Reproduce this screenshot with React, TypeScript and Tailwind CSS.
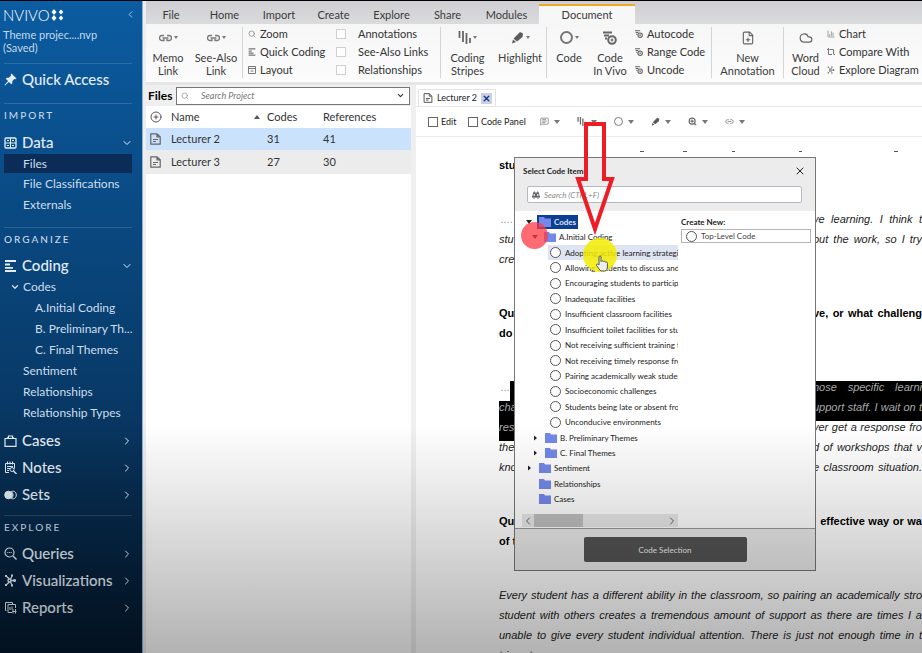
import React from "react";
import {
  BarChart3,
  Binoculars,
  ChevronDown,
  ChevronLeft,
  ChevronRight,
  CirclePlus,
  Cloud,
  FilePlus,
  Link2,
  MessageSquareText,
  Search,
  X,
  ZoomIn,
} from "lucide-react";

const Caret = () => (
  <svg viewBox="0 0 6 4" className="h-[4px] w-[6px] shrink-0 fill-[#777]">
    <path d="M0 0h6L3 4z" />
  </svg>
);

const Folder = () => (
  <svg viewBox="0 0 12 10" className="h-[10px] w-[12px] shrink-0 fill-[#7388ea]">
    <path d="M0 0h5l1 1.500h6V10H0z" />
  </svg>
);

const PinIcon = () => (
  <svg viewBox="0 0 13 13" className="h-[13px] w-[13px] fill-current">
    <path d="M7.500.500 12.500 5.500 11.300 6.300 10.300 6 8.300 8.300 8.300 10.300 7.300 11.300 4.900 8.900 1 12.500.500 12 4.100 8.100 1.700 5.700 2.700 4.700 4.700 4.700 7 2.700 6.700 1.500z" />
  </svg>
);

const DataIcon = () => (
  <svg viewBox="0 0 13 12" className="h-[12px] w-[13px] fill-none stroke-current">
    <rect x="1" y="1" width="11" height="10" rx="1" strokeWidth="1.300" />
    <path d="M1 6h11M6.500 1v10M3 3.500h2M8 3.500h2M3 8.500h2M8 8.500h2" />
  </svg>
);

const CodingIcon = ({ className = "h-[12px] w-[13px]" }: { className?: string }) => (
  <svg viewBox="0 0 13 12" className={`${className} fill-none stroke-current`} strokeWidth="1.800">
    <path d="M1 1h11M1 4.500h5M1 7.800h8M1 11h11" />
  </svg>
);

const CasesIcon = () => (
  <svg viewBox="0 0 13 12" className="h-[12px] w-[13px] fill-none stroke-current" strokeWidth="1.200">
    <path d="M1 3.500h11v7.800H1zM4.500 3.500V1h4v2.500M3.500 2.200v1.300M9.500 2.200v1.300" />
  </svg>
);

const NotesIcon = () => (
  <svg viewBox="0 0 13 13" className="h-[13px] w-[13px] fill-none stroke-current">
    <path d="M5 11.500H1.500v-9h9v5M3.500.500v3M6 .500v3M8.500.500v3M3 5.500h6M3 7.500h3M3 9.500h2" />
    <circle cx="8" cy="8.500" r="2" />
    <path d="m9.500 10 3 3" strokeWidth="1.400" />
  </svg>
);

const SetsIcon = () => (
  <svg viewBox="0 0 13 10" className="h-[10px] w-[13px] stroke-current">
    <circle cx="4.500" cy="5" r="3.800" className="fill-current" />
    <path d="M7.500 1.500c2-1 4.800.300 4.800 3.500s-2.800 4.500-4.800 3.500c2-2 2-5 0-7z" fill="none" />
  </svg>
);

const QueriesIcon = () => (
  <svg viewBox="0 0 13 13" className="h-[13px] w-[13px] fill-none stroke-current">
    <circle cx="5.500" cy="5.500" r="4.500" strokeWidth="1.200" />
    <path d="m9 9 3.500 3.500" strokeWidth="1.400" />
    <path d="M3.300 5.500h1M5 5.500h1M6.700 5.500h1" strokeWidth="1.200" />
  </svg>
);

const NetworkIcon = ({ className = "h-[13px] w-[13px]" }: { className?: string }) => (
  <svg viewBox="0 0 13 13" className={`${className} fill-none stroke-current`}>
    <path d="M2 2l3.500 3M2 11l3.500-3M8 2 6.500 5M8 11 6.500 8M7 6.500h5" strokeWidth="1.300" />
    <circle cx="5.500" cy="6.500" r="1.500" strokeWidth="1.500" />
    <path d="M1 2h2M1 11h2M7 1.500h2M7 11.500h2M10.500 5v3" strokeWidth="2" />
  </svg>
);

const ReportsIcon = () => (
  <svg viewBox="0 0 13 13" className="h-[13px] w-[13px] fill-none stroke-current">
    <path d="M2.500 9.500h-1v-8h7v1.500M8 11.500H4v-8h7.500V7M6 6v3M8 5.500v3" />
    <path d="M9 8v4.500M11.500 8v4.500M8.500 10.500h4" />
  </svg>
);

const FileIcon = ({ className = "h-[12px] w-[11px] stroke-[#666]" }: { className?: string }) => (
  <svg viewBox="0 0 11 12" className={`${className} fill-none`}>
    <path d="M.800.800H7l3.200 3v7.400H.800zM7 .800v3h3.200M3 6.500h5M3 8.500h3" strokeWidth="1.200" />
  </svg>
);

const LinkIcon = ({ className = "h-[8px] w-[13px]" }: { className?: string }) => (
  <svg viewBox="0 0 13 8" className={`${className} fill-none stroke-[#777]`} strokeWidth="1.300">
    <path d="M5 1.500H3a2.500 2.500 0 0 0 0 5h2V5M8 1.500h2a2.500 2.500 0 0 1 0 5H8V5M3.500 4h6" />
  </svg>
);

const StripesIcon = ({ className = "h-[13px] w-[13px]" }: { className?: string }) => (
  <svg viewBox="0 0 13 13" className={`${className} fill-none stroke-[#666]`} strokeWidth="1.800">
    <path d="M1.500 0v7M5 0v11M8.500 2v11M12 7v5" />
  </svg>
);

const PenIcon = ({ className = "h-[13px] w-[13px]" }: { className?: string }) => (
  <svg viewBox="0 0 13 13" className={`${className} fill-[#5c5c5c]`}>
    <path d="M9 1 12 2.500 11.500 6 6 10.500 2.500 7.500zM2 8.500 5 11 1 12.500z" />
  </svg>
);

const CodeIcon = ({ className = "h-[8px] w-[8px]" }: { className?: string }) => (
  <svg viewBox="0 0 14 14" className={`${className} fill-none stroke-[#666]`} strokeWidth="1.800">
    <path d="M0 1.500h9M1 4.500h5M2 7.500h2" />
    <circle cx="9" cy="9" r="3.800" strokeWidth="2" />
    <path d="M7.500 9h3M9 7.500v3" strokeWidth="1.200" />
  </svg>
);

function SideHead({ icon, label, open }: { icon: React.ReactNode; label: string; open?: boolean }) {
  return (
    <button className="flex h-[27px] w-full shrink-0 items-center pr-[9px] pl-1 text-[15px] text-[#e3edf6]">
      <span className="w-[18px] shrink-0">{icon}</span>
      <span className="flex-1 text-left font-medium">{label}</span>
      {open ? <ChevronDown size={12} /> : <ChevronRight size={12} />}
    </button>
  );
}

function SideLink({ label, deep }: { label: string; deep?: boolean }) {
  return (
    <a href="#" className={`flex h-[21px] shrink-0 items-center whitespace-nowrap text-xs text-[#cddeed] ${deep ? "pl-[35px]" : "pl-[23px]"}`}>
      {label}
    </a>
  );
}

function SideTitle({ children }: { children: string }) {
  return (
    <h2 className="mr-[10px] ml-1 shrink-0 border-t border-white/15 pt-[4px] text-[10px] leading-[14px] font-medium tracking-[2px] text-[#c6d8e8]">
      {children}
    </h2>
  );
}

function Sidebar() {
  return (
    <nav className="flex w-[143px] shrink-0 flex-col overflow-hidden border-r border-[#8fb2d0] bg-linear-to-b from-[#0b5ca2] via-[#083a68] via-60% to-[#04182c]">
      <div className="flex h-[27px] shrink-0 items-center pr-[6px] pl-[3px] text-white">
        <span className="text-[15px] leading-4 font-light">NVIVO</span>
        <svg viewBox="0 0 13 12" className="ml-px h-[12px] w-[13px] fill-white">
          <path d="M3 0 5.500 3 3 6 .500 3zM10 .500 12.300 3 10 5.500 7.700 3zM3 6 5.500 9 3 12 .500 9zM10 6.500 12.300 9 10 11.500 7.700 9z" />
        </svg>
        <ChevronLeft size={11} className="ml-auto opacity-70" />
      </div>
      <p className="h-[35px] shrink-0 pl-[3px] text-[11px] leading-[13px] text-[#c2d9ec]">
        Theme projec....nvp
        <br />
        (Saved)
      </p>
      <div className="mr-[10px] ml-1 flex h-[40px] shrink-0 items-center border-t border-white/15 pb-[8px] text-[15px] font-medium text-[#e3edf6]">
        <span className="w-[18px]"><PinIcon /></span>
        Quick Access
      </div>
      <SideTitle>IMPORT</SideTitle>
      <div className="pt-[7px]">
        <SideHead icon={<DataIcon />} label="Data" open />
        <a href="#" className="-mt-[2px] mr-[10px] ml-1 flex h-[19px] items-center bg-[#0a2c57] pl-[19px] text-xs text-[#cddeed]">
          Files
        </a>
        <SideLink label="File Classifications" />
        <SideLink label="Externals" />
      </div>
      <div className="pt-[12px]"><SideTitle>ORGANIZE</SideTitle></div>
      <div className="pt-[6px]">
        <SideHead icon={<CodingIcon />} label="Coding" open />
        <div className="relative -mt-[3px]">
          <ChevronDown size={10} strokeWidth={3} className="absolute top-[6px] left-[10px] text-[#cddeed]" />
          <SideLink label="Codes" />
        </div>
        <SideLink label="A.Initial Coding" deep />
        <SideLink label="B. Preliminary Th..." deep />
        <SideLink label="C. Final Themes" deep />
        <SideLink label="Sentiment" />
        <SideLink label="Relationships" />
        <SideLink label="Relationship Types" />
      </div>
      <div className="pt-[4px] pb-[7px]">
        <SideHead icon={<CasesIcon />} label="Cases" />
        <SideHead icon={<NotesIcon />} label="Notes" />
        <SideHead icon={<SetsIcon />} label="Sets" />
      </div>
      <SideTitle>EXPLORE</SideTitle>
      <div className="pt-[6px]">
        <SideHead icon={<QueriesIcon />} label="Queries" />
        <SideHead icon={<NetworkIcon />} label="Visualizations" />
        <SideHead icon={<ReportsIcon />} label="Reports" />
      </div>
    </nav>
  );
}

function BigTool({ icon, lines, width, caret }: { icon: React.ReactNode; lines: string[]; width: string; caret?: boolean }) {
  return (
    <button className={`flex shrink-0 flex-col items-center ${width}`}>
      <span className="flex h-[27px] items-center gap-[2px] text-[#666]">
        {icon}
        {caret && <svg viewBox="0 0 4 3" className="h-[3px] w-[4px] fill-[#777]"><path d="M0 0h4L2 3z" /></svg>}
      </span>
      {lines.map((l) => (
        <span key={l} className="leading-[13px] whitespace-nowrap">{l}</span>
      ))}
    </button>
  );
}

function SmallTool({ icon, label }: { icon: React.ReactNode; label: string }) {
  return (
    <button className="flex h-[18px] items-center whitespace-nowrap text-[#333]">
      <span className="flex w-[12px] shrink-0 text-[#777]">{icon}</span>
      {label}
    </button>
  );
}

const Divider = () => <div className="mt-[3px] h-[51px] w-px shrink-0 bg-[#d4d4d4]" />;

function Ribbon() {
  return (
    <header className="shrink-0 text-[11px] text-[#3a3a3a]">
      <div className="flex h-[23px] items-end bg-linear-to-b from-[#cfcfd3] to-[#dadbdc] leading-[17px]">
        <button className="w-[50px] pb-px">File</button>
        <button className="w-[57px] pb-px">Home</button>
        <button className="w-[52px] pb-px">Import</button>
        <button className="w-[57px] pb-px">Create</button>
        <button className="w-[59px] pb-px">Explore</button>
        <button className="w-[53px] pb-px">Share</button>
        <button className="w-[65px] pb-px">Modules</button>
        <button className="w-[96px] border-t-2 border-[#eda928] bg-[#f7f7f7] pb-px">Document</button>
      </div>
      <div className="flex h-[61px] overflow-hidden border-b-3 border-[#e6e6e6] bg-linear-to-b from-[#f6f6f6] to-[#fcfcfc]">
        <BigTool icon={<LinkIcon />} lines={["Memo", "Link"]} width="w-[44px]" caret />
        <BigTool icon={<LinkIcon />} lines={["See-Also", "Link"]} width="w-[52px]" caret />
        <Divider />
        <div className="w-[88px] shrink-0 pt-px pl-[5px]">
          <SmallTool icon={<Search size={8} />} label="Zoom" />
          <SmallTool icon={<CodingIcon className="h-[8px] w-[8px]" />} label="Quick Coding" />
          <SmallTool
            icon={
              <svg viewBox="0 0 8 8" className="h-[8px] w-[8px] fill-none stroke-current">
                <path d="M.500.500h7v7h-7zM.500 2.500h7M2.500 5h3" />
              </svg>
            }
            label="Layout"
          />
        </div>
        <div className="flex w-[109px] shrink-0 flex-col pt-px pl-[5px]">
          {["Annotations", "See-Also Links", "Relationships"].map((l) => (
            <label key={l} className="flex h-[18px] items-center gap-[12px] whitespace-nowrap text-[#333]">
              <input type="checkbox" className="h-[10px] w-[10px] shrink-0 appearance-none border border-[#cfcfcf] bg-white" />
              {l}
            </label>
          ))}
        </div>
        <Divider />
        <BigTool icon={<StripesIcon />} lines={["Coding", "Stripes"]} width="w-[53px]" caret />
        <BigTool icon={<PenIcon />} lines={["Highlight"]} width="w-[52px]" caret />
        <Divider />
        <BigTool icon={<span className="h-[13px] w-[13px] rounded-full border-2 border-[#777]" />} lines={["Code"]} width="w-[44px]" caret />
        <BigTool icon={<CodeIcon className="h-[14px] w-[14px]" />} lines={["Code", "In Vivo"]} width="w-[38px]" />
        <div className="w-[82px] shrink-0 pt-px pl-[6px]">
          <SmallTool icon={<CodeIcon />} label="Autocode" />
          <SmallTool icon={<CodeIcon />} label="Range Code" />
          <SmallTool icon={<CodeIcon />} label="Uncode" />
        </div>
        <Divider />
        <BigTool icon={<FilePlus size={14} />} lines={["New", "Annotation"]} width="w-[71px]" />
        <Divider />
        <BigTool icon={<Cloud size={14} />} lines={["Word", "Cloud"]} width="w-[43px]" />
        <div className="shrink-0 pt-px">
          <SmallTool icon={<BarChart3 size={8} />} label="Chart" />
          <SmallTool
            icon={
              <svg viewBox="0 0 8 8" className="h-[8px] w-[8px] fill-none stroke-current">
                <path d="M2.500 1.500h4V6M0 1.500h1M1.500 0v6.500H5M6.500 6.500H8" />
              </svg>
            }
            label="Compare With"
          />
          <SmallTool icon={<NetworkIcon className="h-[8px] w-[8px]" />} label="Explore Diagram" />
        </div>
      </div>
    </header>
  );
}

const files = [
  { name: "Lecturer 2", codes: 31, refs: 41, row: "h-[22px] bg-[#cae2fb]" },
  { name: "Lecturer 3", codes: 27, refs: 30, row: "h-[24px] bg-[#ececec]" },
];

function FilesPanel() {
  return (
    <section className="w-[265px] shrink-0 text-[11px] text-[#333]">
      <div className="flex h-[21px] items-center bg-[#efefef] pr-px pl-[2px]">
        <h1 className="w-[28px] text-xs font-bold text-black">Files</h1>
        <label className="flex h-[18px] flex-1 items-center border border-[#777] bg-white px-[4px]">
          <Search size={8} className="shrink-0 text-[#888]" />
          <input aria-label="Search Project" placeholder="Search Project" className="w-full min-w-0 pl-[12px] text-[9px] italic outline-none placeholder:text-[#777]" />
          <ChevronDown size={9} strokeWidth={3} className="shrink-0" />
        </label>
      </div>
      <table className="w-full table-fixed text-left">
        <thead>
          <tr className="h-[22px]">
            <th className="w-[25px] pl-[4px]"><CirclePlus size={12} strokeWidth={2} className="text-[#555]" /></th>
            <th className="w-[96px] font-normal">
              <span className="flex items-center justify-between">
                Name
                <svg viewBox="0 0 6 4" className="mr-[7px] h-[4px] w-[6px] fill-[#555]"><path d="M3 0l3 4H0z" /></svg>
              </span>
            </th>
            <th className="w-[56px] font-normal">Codes</th>
            <th className="font-normal">References</th>
          </tr>
        </thead>
        <tbody>
          {files.map((f) => (
            <tr key={f.name} className={f.row}>
              <td className="pl-[4px]"><FileIcon /></td>
              <td>{f.name}</td>
              <td>{f.codes}</td>
              <td>{f.refs}</td>
            </tr>
          ))}
        </tbody>
      </table>
    </section>
  );
}

// left: words before the dialog, right: words after it
function Line({ left, right, dark = "" }: { left: React.ReactNode; right?: string; dark?: string }) {
  return (
    <div className="flex h-5">
      <span className={`w-[314px] shrink-0 ${dark.includes("l") ? "bg-black text-[#aaa]" : ""}`}>{left}</span>
      <span className={`h-5 flex-1 [text-align-last:justify] ${dark.includes("r") ? "bg-black text-[#aaa]" : ""}`}>{right}</span>
    </div>
  );
}

const tools = [
  { name: "Annotations", icon: <MessageSquareText size={9} className="text-[#777]" /> },
  { name: "Coding stripes", icon: <StripesIcon className="h-[9px] w-[9px]" /> },
  { name: "Code", icon: <span className="h-[9px] w-[9px] rounded-full border border-[#777]" /> },
  { name: "Highlight", icon: <PenIcon className="h-[9px] w-[9px]" /> },
  { name: "Zoom", icon: <ZoomIn size={9} strokeWidth={3} className="text-[#666]" /> },
  { name: "Link", icon: <Link2 size={9} className="text-[#777]" /> },
];

function DocumentPane() {
  return (
    <section className="flex min-w-0 flex-1 flex-col border-l-5 border-[#efefef] bg-white">
      <div className="flex h-[22px] shrink-0 items-end border-b border-[#e8e8e8]">
        <button className="ml-[2px] flex h-[17px] items-center border-x border-t border-[#e4e4e4] pr-[3px] pl-[4px] text-[9px] text-[#222]">
          <FileIcon className="mr-[4px] h-[10px] w-[10px] stroke-[#555]" />
          Lecturer 2
          <span className="ml-[4px] flex h-[11px] w-[11px] items-center justify-center bg-[#c9d2e4] text-[#1d3a86]">
            <X size={9} strokeWidth={4} />
          </span>
        </button>
      </div>
      <div className="flex h-[30px] shrink-0 items-center border-b border-[#ececec] pl-[12px] text-[9px] text-[#222]">
        <label className="flex w-[40px] items-center gap-[3px] whitespace-nowrap">
          <input type="checkbox" className="h-[10px] w-[10px] appearance-none border border-[#666]" /> Edit
        </label>
        <label className="flex w-[72px] items-center gap-[3px] whitespace-nowrap">
          <input type="checkbox" className="h-[10px] w-[10px] appearance-none border border-[#666]" /> Code Panel
        </label>
        {tools.map((t) => (
          <button key={t.name} aria-label={t.name} className="flex w-[37px] items-center gap-[5px]">
            {t.icon}
            <Caret />
          </button>
        ))}
      </div>
      <article className="flex flex-1 flex-col gap-[34px] overflow-hidden pl-[83px] font-['Liberation_Sans',Arial,sans-serif] text-[11px] leading-3 whitespace-nowrap text-[#222] italic">
        <div className="-mb-[34px] flex h-[22px] shrink-0 pt-[14px] pl-[141px]">
          <i className="mr-[39px] h-px w-[4px] bg-[#555]" />
          <i className="mr-[45px] h-px w-[4px] bg-[#555]" />
          <i className="mr-[64px] h-px w-[3px] bg-[#555]" />
          <i className="mr-[92px] h-px w-[3px] bg-[#555]" />
          <i className="h-px w-[4px] bg-[#555]" />
        </div>
        <div className="font-bold text-black not-italic"><Line left="stu" /></div>
        <div>
          <Line left={<span className="pl-[2px] text-[#999]">....</span>} right="ve learning. I think t" />
          <Line left="stu" right="out the work, so I try" />
          <Line left="cre" />
        </div>
        <div className="font-bold text-black not-italic">
          <Line left="Qu" right="ve, or what challeng" />
          <Line left="do" />
        </div>
        <div>
          <Line
            left={
              <span className="flex">
                <span className="w-[11px] pl-[2px] text-[#999]">...</span>
                <span className="h-5 flex-1 bg-black" />
              </span>
            }
            right="nose specific learni"
            dark="r"
          />
          <Line left="cha" right="upport staff. I wait on t" dark="lr" />
          <Line left="res" right="ver get a response fro" dark="l" />
          <Line left="the" right="d of workshops that v" />
          <Line left="kno" right="e classroom situation." />
        </div>
        <div className="font-bold text-black not-italic">
          <Line left="Qu" right={"\u00a0\u00a0effective way or wa"} />
          <Line left="of t" />
        </div>
        <div>
          <p className="h-5 [text-align-last:justify]">Every student has a different ability in the classroom, so pairing an academically stro</p>
          <p className="h-5 [text-align-last:justify]">student with others creates a tremendous amount of support as there are times I a</p>
          <p className="h-5 [text-align-last:justify]">unable to give every student individual attention. There is just not enough time in t</p>
          <p className="h-5">trimester.</p>
        </div>
      </article>
    </section>
  );
}

const codes = [
  "Adopting active learning strategies",
  "Allowing students to discuss and",
  "Encouraging students to participate",
  "Inadequate facilities",
  "Insufficient classroom facilities",
  "Insufficient toilet facilities for students",
  "Not receiving sufficient training for",
  "Not receiving timely response from",
  "Pairing academically weak students",
  "Socioeconomic challenges",
  "Students being late or absent from",
  "Unconducive environments",
];

function Branch({ label, pad, arrow }: { label: string; pad: string; arrow?: "open" | "closed" }) {
  return (
    <button className={`flex flex-1 items-center ${pad}`}>
      <span className="w-[12px] shrink-0">
        {arrow && (
          <svg viewBox="0 0 6 6" className="h-[6px] w-[6px] fill-[#222]">
            {arrow === "open" ? <path d="M0 1h6L3 5z" /> : <path d="M1 0.500l3 2.500-3 2.500z" />}
          </svg>
        )}
      </span>
      <Folder />
      <span className="ml-[3px]">{label}</span>
    </button>
  );
}

function CodeDialog() {
  return (
    <div role="dialog" aria-label="Select Code Items" className="absolute top-[156px] left-[514px] flex h-[414px] w-[302px] flex-col border border-[#777] bg-white text-[8px] text-[#222]">
      <div className="h-[53px] shrink-0 bg-[#ececec] pt-[6px] pr-[9px] pl-[8px]">
        <div className="flex h-[13px] items-center justify-between">
          <h2 className="font-bold">Select Code Items</h2>
          <button aria-label="Close"><X size={12} strokeWidth={2} /></button>
        </div>
        <label className="mt-[9px] mr-[4px] ml-[4px] flex h-[17px] items-center rounded-xs border border-[#b4b9c6] bg-white pl-[4px]">
          <Binoculars size={8} strokeWidth={3} className="shrink-0 text-[#555]" />
          <input aria-label="Search codes" placeholder="Search (CTRL+F)" className="w-full min-w-0 pl-[4px] italic outline-none placeholder:text-[#888]" />
        </label>
      </div>
      <div className="flex flex-1 pt-[3px]">
        <div className="w-[163px] shrink-0 overflow-hidden whitespace-nowrap">
          <div className="flex h-[293px] flex-col">
            <button className="flex flex-1 items-center pl-[11px]">
              <svg viewBox="0 0 6 6" className="mr-[5px] h-[6px] w-[6px] fill-[#222]"><path d="M0 1h6L3 5z" /></svg>
              <span className="flex h-[14px] items-center gap-[3px] bg-[#0c3f93] pr-[2px] pl-[2px] font-bold text-[#dbe5f7]">
                <Folder /> Codes
              </span>
            </button>
            <Branch label="A.Initial Coding" pad="pl-[17px]" arrow="open" />
            {codes.map((c, i) => (
              <label key={c} className={`ml-[33px] flex flex-1 items-center gap-[4px] pl-[2px] ${i === 0 ? "bg-[#dfe4f3]" : ""}`}>
                <input type="radio" name="code" className="h-[11px] w-[11px] shrink-0 appearance-none rounded-full border border-[#555] bg-white" />
                {c}
              </label>
            ))}
            <Branch label="B. Preliminary Themes" pad="pl-[18px]" arrow="closed" />
            <Branch label="C. Final Themes" pad="pl-[18px]" arrow="closed" />
            <Branch label="Sentiment" pad="pl-[12px]" arrow="closed" />
            <Branch label="Relationships" pad="pl-[12px]" />
            <Branch label="Cases" pad="pl-[12px]" />
          </div>
          <div className="mt-[7px] ml-[7px] flex h-[13px] items-center bg-[#e8e8e8] text-[#666]">
            <ChevronLeft size={12} />
            <span className="h-full w-[49px] bg-[#bfbfbf]" />
            <ChevronRight size={12} className="ml-auto" />
          </div>
        </div>
        <div className="flex-1 pt-[2px] pr-[4px] pl-[3px]">
          <h3 className="leading-[12px] font-bold">Create New:</h3>
          <button className="mt-px flex h-[14px] w-full items-center gap-[4px] border border-[#b5b5b5] px-[4px] text-[#444]">
            <span className="h-[11px] w-[11px] rounded-full border border-[#555]" />
            Top-Level Code
          </button>
        </div>
      </div>
      <div className="flex h-[42px] shrink-0 items-center justify-center border-t border-[#999] bg-[#ebebeb]">
        <button className="h-[25px] w-[163px] rounded-xs bg-[#545454] text-[#eee]">Code Selection</button>
      </div>
    </div>
  );
}

export default function App() {
  return (
    <div className="relative flex h-screen overflow-hidden border-t border-black bg-white font-[Lato,'Noto_Sans',sans-serif]">
      <Sidebar />
      <main className="flex min-w-0 flex-1 flex-col border-l-3 border-[#eceef0]">
        <Ribbon />
        <div className="flex min-h-0 flex-1">
          <FilesPanel />
          <DocumentPane />
        </div>
      </main>
      <CodeDialog />
      <div className="pointer-events-none absolute inset-0 bg-linear-to-b from-transparent from-65% to-black/30" />
      <div className="pointer-events-none absolute top-[221px] left-[521px] h-[27px] w-[27px] rounded-full bg-[#ff3a44]/75" />
      <div className="pointer-events-none absolute top-[237px] left-[583px] h-[34px] w-[34px] rounded-full bg-[#f3ec00]/85" />
      <svg viewBox="0 0 14 17" className="pointer-events-none absolute top-[254px] left-[595px] h-[17px] w-[14px] fill-[#eee] stroke-[#555]">
        <path d="M4 10V2c0-1.500 2-1.500 2 0v4.500c.500-1 2-1 2.200.200.500-.800 2-.600 2.200.500.700-.700 2-.300 2 1V12c0 2-1 4-2.500 4H6c-1.500-1-3-3.500-4.500-5.500C.800 9.300 2.500 8.300 4 10z" />
      </svg>
      <svg viewBox="0 0 40 114" className="pointer-events-none absolute top-[120px] left-[575px] h-[114px] w-[40px] fill-none stroke-[#ee1c24]" strokeWidth="4">
        <path d="M11 3h18v55h8L20 108 3 58h8z" />
      </svg>
    </div>
  );
}
